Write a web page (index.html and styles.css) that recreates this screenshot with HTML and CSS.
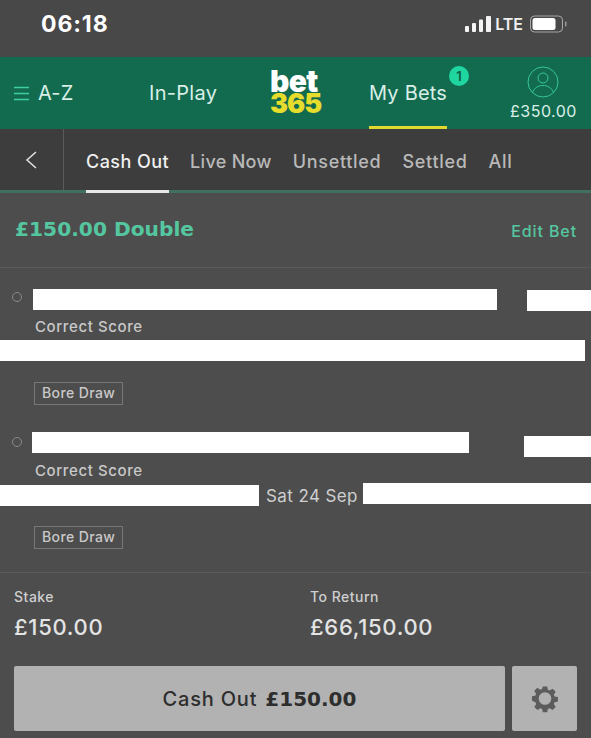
FILE: index.html
```html
<!DOCTYPE html>
<html lang="en">
<head>
<meta charset="utf-8">
<title>My Bets</title>
<link rel="stylesheet" href="styles.css">
</head>
<body>
<div class="phone">
  <div class="status">
    <span class="time">06:18</span>
    <div class="status-right">
      <svg class="signal" width="26" height="17" viewBox="0 0 26 17"><rect x="0" y="10" width="4" height="6" rx="1"/><rect x="7" y="7" width="4" height="9" rx="1"/><rect x="14" y="3.500" width="4" height="12.500" rx="1"/><rect x="21" y="0" width="5" height="16" rx="1"/></svg>
      <span class="lte">LTE</span>
      <svg class="battery" width="37" height="18" viewBox="0 0 37 18"><rect x="0.500" y="1" width="32" height="16" rx="4" fill="none" stroke="#a8a8a8"/><rect x="2.500" y="3" width="23" height="12" rx="2.500" fill="#fff"/><rect x="35" y="6.500" width="1.500" height="5" rx="0.700" fill="#9a9a9a"/></svg>
    </div>
  </div>

  <header class="topbar">
    <div class="az">
      <svg width="15" height="15" viewBox="0 0 15 15"><path d="M0 1.500h15M0 7.500h15M0 13.500h15" stroke="#3fcf9f" stroke-width="1.300" fill="none"/></svg>
      <span>A-Z</span>
    </div>
    <div class="inplay">In-Play</div>
    <div class="logo"><span class="logo-bet">bet</span><span class="logo-365">365</span></div>
    <div class="mybets">
      <span>My Bets</span>
      <span class="badge">1</span>
    </div>
    <div class="account">
      <svg width="32" height="32" viewBox="0 0 32 32" fill="none" stroke="#35c69a" stroke-width="1"><circle cx="16" cy="16" r="15"/><circle cx="16" cy="12" r="5"/><path d="M5.500 26.500c2-5 6-7 10.500-7s8.500 2 10.500 7"/></svg>
      <span>£350.00</span>
    </div>
  </header>

  <nav class="subnav">
    <div class="back"><svg width="12" height="18" viewBox="0 0 12 18"><path d="M11 1 2 9l9 8" fill="none" stroke="#e4e4e4" stroke-width="1.500"/></svg></div>
    <div class="tabs">
      <span class="tab active">Cash Out</span>
      <span class="tab tight">Live Now</span>
      <span class="tab wide">Unsettled</span>
      <span class="tab wide">Settled</span>
      <span class="tab wide">All</span>
    </div>
  </nav>

  <div class="bet-head">
    <span class="bet-title">£150.00 Double</span>
    <span class="edit">Edit Bet</span>
  </div>

  <section class="selections">
    <div class="selection first">
      <div class="line line-a"><i class="dot"></i><i class="mask m1"></i><i class="mask m2"></i></div>
      <div class="market">Correct Score</div>
      <div class="line line-b"><i class="mask m3"></i></div>
      <span class="tag">Bore Draw</span>
    </div>
    <div class="selection second">
      <div class="line line-a"><i class="dot"></i><i class="mask m4"></i><i class="mask m5"></i></div>
      <div class="market">Correct Score</div>
      <div class="line line-b"><i class="mask m6"></i><span class="date">Sat 24 Sep</span><i class="mask m7"></i></div>
      <span class="tag">Bore Draw</span>
    </div>
  </section>

  <section class="totals">
    <div class="total stake"><div class="total-label">Stake</div><div class="total-value">£150.00</div></div>
    <div class="total"><div class="total-label">To Return</div><div class="total-value">£66,150.00</div></div>
  </section>

  <div class="actions">
    <button class="cashout">Cash Out <b>£150.00</b></button>
    <button class="gear"><svg width="28" height="28" viewBox="0 0 28 28"><path fill="#5c5c5c" fill-rule="evenodd" d="M11.500 1h5l.7 3.700 2 .9 3.200-2.100 3.500 3.500-2.100 3.200.9 2 3.700.7v5l-3.700.7-.9 2 2.100 3.200-3.500 3.500-3.200-2.100-2 .9-.7 3.700h-5l-.7-3.700-2-.9-3.200 2.100-3.500-3.500 2.100-3.200-.9-2L-.5 17v-5l3.700-.7.9-2-2.100-3.200 3.500-3.500 3.200 2.100 2-.9zM14 7.500a7 7 0 1 0 0 14 7 7 0 0 0 0-14z" transform="translate(1.400 .5) scale(.9)"/></svg></button>
  </div>
</div>
</body>
</html>
```

FILE: styles.css
```css
* { box-sizing: border-box; }
html, body { margin: 0; padding: 0; }
body { background: #4d4d4d; font-family: Inter, "Liberation Sans", sans-serif; }
.phone { width: 591px; height: 738px; overflow: hidden; background: #4d4d4d; }

.status { height: 57px; background: #484848; display: flex; align-items: flex-start; justify-content: space-between; padding: 11px 24px 0 41px; }
.time { font-size: 23px; line-height: 27px; font-weight: 700; color: #fff; letter-spacing: .9px; }
.status-right { display: flex; align-items: center; gap: 4px; padding-top: 4px; }
.signal { fill: #f4f4f4; }
.lte { font-size: 16px; line-height: 18px; font-weight: 600; color: #f0f0f0; }
.battery { margin-left: 3px; }

.topbar { height: 72px; background: #136b4f; display: flex; color: #d9efe7; font-size: 20px; }
.az { display: flex; align-items: center; gap: 9px; padding-left: 14px; width: 149px; height: 72px; }
.az span { letter-spacing: .2px; }
.inplay { width: 121px; line-height: 72px; letter-spacing: .3px; }
.logo { width: 99px; display: flex; flex-direction: column; padding-top: 12px; font-weight: 900; }
.logo-bet { color: #fff; font-size: 30px; line-height: 24px; letter-spacing: -.6px; height: 24px; }
.logo-365 { color: #e6dc2c; font-size: 27px; line-height: 22px; letter-spacing: -1px; height: 22px; }
.mybets { width: 78px; height: 72px; line-height: 72px; position: relative; border-bottom: 3px solid #e2d92f; white-space: nowrap; letter-spacing: .2px; }
.badge { position: absolute; left: 80px; top: 9px; width: 20px; height: 20px; border-radius: 50%; background: #1fd6a0; color: #0f5a42; font-size: 13px; line-height: 20px; text-align: center; font-weight: 600; letter-spacing: 0; }
.account { margin-left: 63px; display: flex; flex-direction: column; align-items: center; padding-top: 9px; font-size: 16px; letter-spacing: .5px; gap: 4px; line-height: 19px; }

.subnav { height: 64px; background: #3d3d3d; border-bottom: 3px solid #3f7060; display: flex; }
.back { width: 64px; height: 61px; border-right: 1px solid #5a5a5a; display: flex; align-items: center; padding-left: 25px; }
.tabs { display: flex; padding-left: 22px; gap: 21px; }
.tab { font-size: 18px; line-height: 66px; height: 64px; color: #b9b9b9; font-weight: 500; letter-spacing: .45px; }
.tab.tight { letter-spacing: .3px; }
.tab.wide { letter-spacing: .7px; }
.tab.active { color: #efefef; border-bottom: 3px solid #e8e8e8; }

.bet-head { height: 75px; border-bottom: 1px solid #5a5a5a; display: flex; align-items: center; justify-content: space-between; padding: 0 14px 0 15px; }
.bet-title { font-family: "DejaVu Sans", sans-serif; font-size: 20.200px; font-weight: 700; color: #55c7a0; padding-bottom: 2px; }
.edit { font-size: 16px; font-weight: 500; color: #55c7a0; letter-spacing: .9px; padding-top: 2px; }

.selections { height: 305px; border-bottom: 1px solid #5a5a5a; }
.selection { height: 144px; }
.selection.first { padding-top: 21px; }
.selection.second { padding-top: 20px; }
.line { display: flex; align-items: flex-start; }
.line-a { height: 26px; }
.line-b { height: 21px; margin-top: 4px; }
.second .line-b { margin-top: 3px; }
.dot { width: 10px; height: 10px; margin: 3px 0 0 12px; border: 1.500px solid #8a8a8a; border-radius: 50%; flex: none; }
.second .dot { margin-top: 5px; }
.mask { display: block; background: #fff; flex: none; height: 21px; }
.m1 { width: 464px; margin-left: 11px; }
.m2 { width: 64px; margin: 1px 0 0 30px; }
.m3 { width: 585px; }
.m4 { width: 437px; margin-left: 10px; }
.m5 { width: 67px; margin: 4px 0 0 55px; }
.m6 { width: 259px; margin-top: 2px; }
.m7 { width: 228px; }
.date { font-size: 17px; line-height: 24px; color: #cfcfcf; margin: 1px 6px 0 7px; letter-spacing: .4px; width: 91px; white-space: nowrap; }
.market { font-size: 15px; line-height: 18px; color: #c9c9c9; margin: 3px 0 0 35px; letter-spacing: .6px; font-weight: 500; height: 18px; }
.second .market { margin-top: 4px; }
.tag { display: inline-block; margin: 21px 0 0 34px; height: 23px; width: 89px; border: 1px solid #777; font-size: 14px; line-height: 20px; color: #c9c9c9; padding-left: 7px; letter-spacing: .4px; font-weight: 500; white-space: nowrap; }
.second .tag { margin-top: 22px; }

.totals { display: flex; height: 93px; padding: 15px 0 0 14px; }
.total { color: #cfcfcf; }
.stake { width: 296px; }
.total-label { font-size: 14px; line-height: 18px; letter-spacing: .5px; font-weight: 500; }
.total-value { font-size: 22px; line-height: 26px; margin-top: 8px; color: #e4e4e4; letter-spacing: .7px; font-weight: 500; }

.actions { display: flex; gap: 7px; padding-left: 14px; }
.actions button { border: 0; border-radius: 2px; background: #b2b2b2; height: 65px; font-family: inherit; padding: 0; display: flex; align-items: center; justify-content: center; }
.cashout { width: 491px; font-size: 20px; color: #2e2e2e; font-weight: 500; gap: 8px; letter-spacing: .8px; }
.cashout b { font-family: "DejaVu Sans", sans-serif; font-weight: 700; letter-spacing: 0; }
.gear { width: 65px; }
```
